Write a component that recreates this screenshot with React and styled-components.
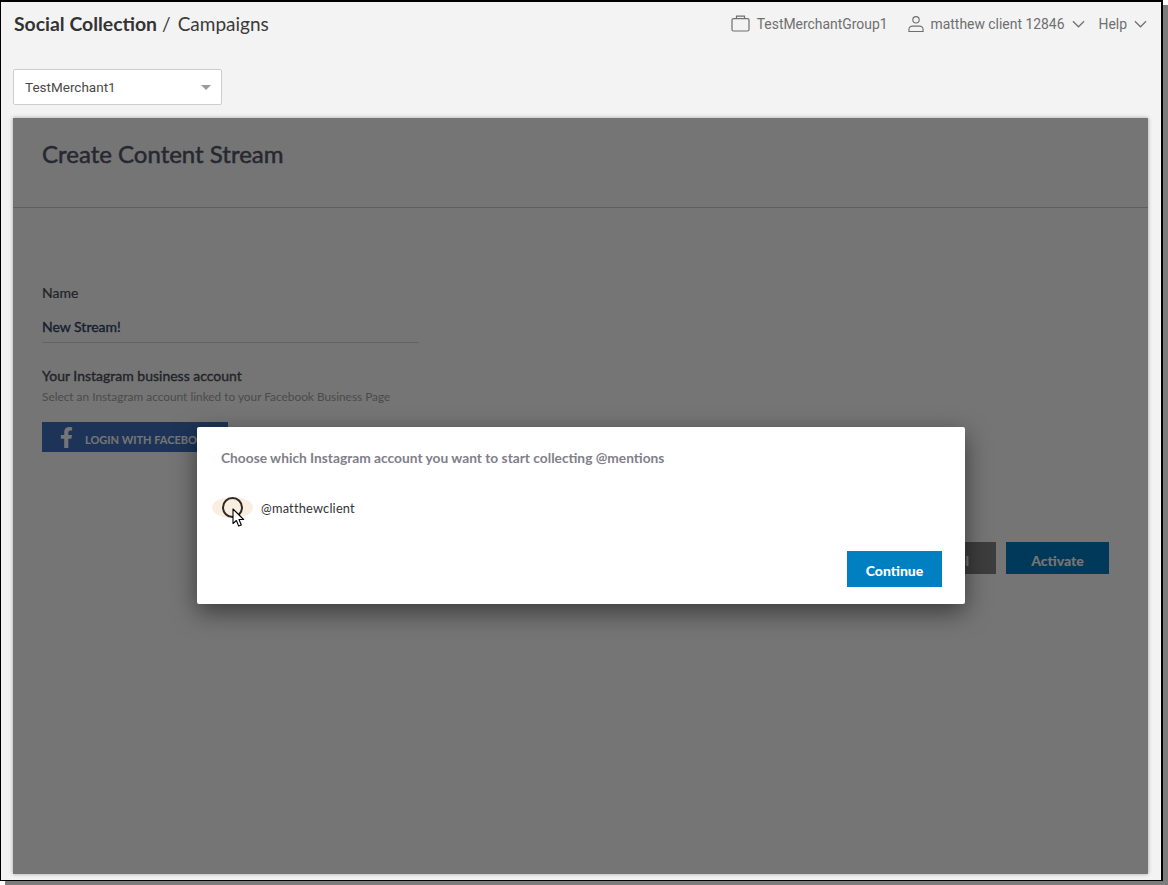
import styled, { createGlobalStyle } from 'styled-components';
import { FaFacebookF } from 'react-icons/fa';

const GlobalStyle = createGlobalStyle`
    html, body {
        margin: 0;
        padding: 0;
        background: #fff;
    }

    body {
        min-height: 885px;
    }
`;

const BriefcaseIcon = () => (
    <svg width="19" height="17" viewBox="0 0 19 17" fill="none" stroke="#6f6f6f" strokeWidth="1.2">
        <rect x="1" y="3.6" width="17" height="12.4" rx="1.5" />
        <path d="M5.5 3.6V1.2h8v2.4" />
    </svg>
);

const UserIcon = () => (
    <svg width="16" height="18" viewBox="0 0 17 18" fill="none" stroke="#6f6f6f" strokeWidth="1.2">
        <circle cx="8.5" cy="4.6" r="3.4" />
        <path d="M1 17v-2.4c0-2 2-3.4 3.6-3.4h7.8c1.6 0 3.6 1.4 3.6 3.4V17z" />
    </svg>
);

const ChevronIcon = () => (
    <svg width="13" height="8" viewBox="0 0 14 8" fill="none" stroke="#6f6f6f" strokeWidth="1.3">
        <path d="M1 1l6 6 6-6" />
    </svg>
);

const CursorIcon = () => (
    <svg width="14" height="20" viewBox="0 0 14 20">
        <path d="M1 1v14.5l3.4-3 2.3 5.6 2.6-1.1-2.3-5.5h4.6z" fill="#fff" stroke="#000" strokeWidth="1.1" strokeLinejoin="round" />
    </svg>
);

export default function App() {
    return (
        <Frame>
            <GlobalStyle />
            <TopBar>
                <Breadcrumb>
                    <strong>Social Collection</strong>
                    <Slash>/</Slash>
                    <span>Campaigns</span>
                </Breadcrumb>
                <TopNav>
                    <NavItem $after={6}><BriefcaseIcon />TestMerchantGroup1</NavItem>
                    <NavItem><UserIcon />matthew client 12846<ChevronIcon /></NavItem>
                    <NavItem>Help<ChevronIcon /></NavItem>
                </TopNav>
            </TopBar>
            <SelectRow>
                <MerchantSelect>
                    TestMerchant1
                    <Caret />
                </MerchantSelect>
            </SelectRow>
            <Panel>
                <PanelHeader>
                    <PanelTitle>Create Content Stream</PanelTitle>
                </PanelHeader>
                <Form>
                    <FieldLabel>Name</FieldLabel>
                    <NameValue>New Stream!</NameValue>
                    <SectionLabel>Your Instagram business account</SectionLabel>
                    <HelpText>Select an Instagram account linked to your Facebook Business Page</HelpText>
                    <FacebookButton>
                        <FaFacebookF size={21} />
                        <FacebookLabel>LOGIN WITH FACEBOOK</FacebookLabel>
                    </FacebookButton>
                    <Actions>
                        <ActionButton $color="#858585">Cancel</ActionButton>
                        <ActionButton $color="#007cc3" $width={103}>Activate</ActionButton>
                    </Actions>
                </Form>
                <Overlay />
                <Modal>
                    <ModalTitle>Choose which Instagram account you want to start collecting @mentions</ModalTitle>
                    <AccountRow>
                        <RadioHalo>
                            <Radio />
                            <Cursor><CursorIcon /></Cursor>
                        </RadioHalo>
                        <AccountName>@matthewclient</AccountName>
                    </AccountRow>
                    <ModalFooter>
                        <ContinueButton>Continue</ContinueButton>
                    </ModalFooter>
                </Modal>
            </Panel>
        </Frame>
    );
}

const Frame = styled.div`
    box-sizing: border-box;
    width: 1163px;
    height: 881px;
    border: 1px solid #000;
    border-top-width: 2px;
    border-right-width: 2px;
    background: #f3f3f3;
    padding: 0 13px 6px 12px;
    box-shadow: 5px 5px 0 #7c7c7c;
    display: flex;
    flex-direction: column;
    font-family: Lato, "Liberation Sans", sans-serif;
`;

const TopBar = styled.header`
    height: 43px;
    display: flex;
    align-items: center;
    justify-content: space-between;
    padding-right: 1px;
`;

const Breadcrumb = styled.div`
    display: flex;
    align-items: center;
    padding-left: 1px;
    font-size: 19px;
    color: #3a3a3a;

    strong {
        font-size: 19.4px;
        font-weight: 700;
        color: #333;
    }
`;

const Slash = styled.span`
    margin: 0 7px 0 5px;
`;

const TopNav = styled.nav`
    display: flex;
    align-items: center;
    gap: 14px;
    font-family: Roboto, "Liberation Sans", sans-serif;
    font-size: 13.92px;
    color: #6f6f6f;
`;

const NavItem = styled.div`
    display: flex;
    align-items: center;
    gap: 7px;
    margin-right: ${(p) => p.$after || 0}px;
`;

const SelectRow = styled.div`
    height: 73px;
    padding-top: 24px;
    box-sizing: border-box;
`;

const MerchantSelect = styled.div`
    box-sizing: border-box;
    width: 209px;
    height: 36px;
    display: flex;
    align-items: center;
    justify-content: space-between;
    padding: 0 10px 0 11px;
    background: #fff;
    border: 1px solid #cdcdcd;
    border-radius: 2px;
    font-family: Roboto, "Liberation Sans", sans-serif;
    font-size: 13.5px;
    color: #4a4a4a;
`;

const Caret = styled.span`
    width: 0;
    height: 0;
    border-left: 5px solid transparent;
    border-right: 5px solid transparent;
    border-top: 5px solid #9b9b9b;
`;

const Panel = styled.main`
    position: relative;
    flex: 1;
    background: #fff;
    box-shadow: 0 0 4px rgba(0, 0, 0, 0.35);
`;

const PanelHeader = styled.div`
    box-sizing: border-box;
    height: 90px;
    padding: 19px 29px 0;
    border-bottom: 1px solid #cfcfcf;
`;

const PanelTitle = styled.h1`
    margin: 0;
    font-size: 24px;
    line-height: 34px;
    font-weight: 400;
    -webkit-text-stroke: 0.5px #54586a;
    color: #54586a;
`;

const Form = styled.section`
    padding: 76px 39px 0 29px;
`;

const FieldLabel = styled.div`
    font-size: 14px;
    line-height: 18px;
    -webkit-text-stroke: 0.2px #4a4d58;
    color: #4a4d58;
`;

const NameValue = styled.div`
    box-sizing: border-box;
    width: 377px;
    height: 25px;
    margin-top: 16px;
    font-size: 14px;
    line-height: 18px;
    -webkit-text-stroke: 0.35px #31466a;
    color: #31466a;
    border-bottom: 1px solid #d8d8d8;
`;

const SectionLabel = styled.div`
    margin-top: 24px;
    font-size: 14px;
    line-height: 18px;
    -webkit-text-stroke: 0.35px #4a4d58;
    color: #4a4d58;
`;

const HelpText = styled.div`
    margin-top: 4px;
    font-size: 11.85px;
    line-height: 16px;
    color: #a4a4a4;
`;

const FacebookButton = styled.div`
    box-sizing: border-box;
    width: 186px;
    height: 30px;
    margin-top: 17px;
    padding-left: 14px;
    display: flex;
    align-items: center;
    gap: 8px;
    background: #4171bf;
    color: #fff;
    font-size: 11px;
    font-weight: 700;
    white-space: nowrap;
    overflow: hidden;
`;

const FacebookLabel = styled.span`
    padding-top: 5px;
`;

const Actions = styled.div`
    display: flex;
    justify-content: flex-end;
    gap: 10px;
    margin-top: 90px;
`;

const ActionButton = styled.div`
    box-sizing: border-box;
    width: ${(p) => p.$width || 96}px;
    height: 32px;
    padding-top: 5px;
    display: flex;
    align-items: center;
    justify-content: center;
    background: ${(p) => p.$color};
    color: #fff;
    font-size: 14px;
    font-weight: 900;
`;

const Overlay = styled.div`
    position: absolute;
    inset: 0;
    background: rgba(0, 0, 0, 0.54);
`;

const Modal = styled.div`
    position: absolute;
    left: 184px;
    top: 309px;
    box-sizing: border-box;
    width: 768px;
    height: 177px;
    padding: 22px 23px 17px 24px;
    background: #fff;
    border-radius: 2px;
    box-shadow: 0 8px 24px rgba(0, 0, 0, 0.5);
    display: flex;
    flex-direction: column;
`;

const ModalTitle = styled.div`
    font-size: 13.75px;
    line-height: 18px;
    font-weight: 700;
    color: #7f808a;
`;

const AccountRow = styled.div`
    display: flex;
    align-items: center;
    gap: 8px;
    margin-top: 30px;
    margin-left: -9px;
`;

const RadioHalo = styled.div`
    position: relative;
    width: 41px;
    height: 21px;
    display: flex;
    align-items: center;
    justify-content: center;
    border-radius: 50%;
    background: #f8efe1;
`;

const Radio = styled.div`
    box-sizing: border-box;
    width: 21px;
    height: 21px;
    border: 2px solid #2e2a22;
    border-radius: 50%;
`;

const Cursor = styled.span`
    position: absolute;
    left: 20px;
    top: 11px;
    display: flex;
`;

const AccountName = styled.span`
    margin-top: 1px;
    font-size: 12.8px;
    letter-spacing: 0.2px;
    color: #333;
`;

const ModalFooter = styled.div`
    margin-top: auto;
    display: flex;
    justify-content: flex-end;
`;

const ContinueButton = styled.div`
    width: 95px;
    height: 36px;
    padding-top: 2px;
    box-sizing: border-box;
    display: flex;
    align-items: center;
    justify-content: center;
    background: #0080c0;
    color: #fff;
    font-size: 14px;
    font-weight: 900;
`;
